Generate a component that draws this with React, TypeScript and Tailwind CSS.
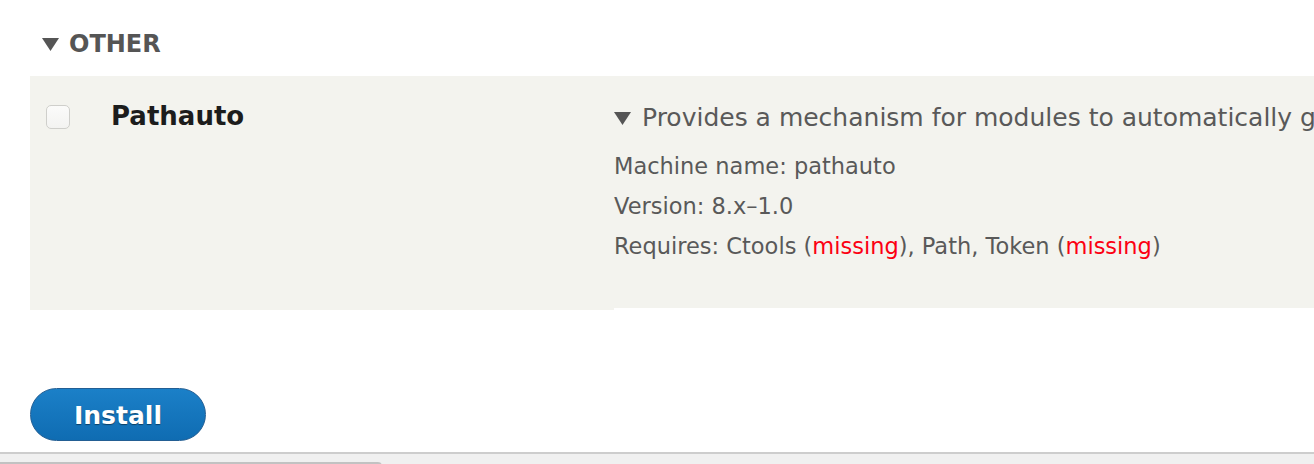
import React from "react";

const font = { fontFamily: '"DejaVu Sans", "Liberation Sans", sans-serif' };

function Caret({ className }: { className?: string }) {
  return (
    <svg viewBox="0 0 17 13" className={className} aria-hidden="true">
      <path d="M0 0 H17 L8.5 13 Z" fill="#555555" />
    </svg>
  );
}

function Missing() {
  return <span className="text-[#fc0012]">missing</span>;
}

export default function App() {
  return (
    <div className="flex h-[464px] w-[1314px] flex-col overflow-hidden bg-white" style={font}>
      <div className="flex flex-1 flex-col pl-[30px]">
        {/* section header */}
        <div className="mb-[16px] flex items-center gap-[10px] pl-[12px] pt-[28px]">
          <Caret className="h-[13px] w-[17px]" />
          <span className="text-[24px] font-bold leading-[32px] text-[#555555]">OTHER</span>
        </div>

        {/* module row */}
        <div className="flex items-start">
          <div className="flex h-[234px] w-[584px] shrink-0 items-start bg-[#f3f3ee]">
            <div className="ml-[16px] mt-[29px] h-[24px] w-[24px] rounded-[5px] border border-[#cfcfcb] bg-gradient-to-b from-[#fbfbfa] to-[#f3f3f1]" />
            <div className="ml-[41px] mt-[24px] text-[26px] font-bold leading-[32px] text-[#1c1c1c]">
              Pathauto
            </div>
          </div>
          <div className="flex-1 whitespace-nowrap bg-[#f3f3ee] pb-[42px] pt-[26px] text-[#595959]">
            <div className="flex items-center gap-[11px] text-[25px] leading-[32px]">
              <Caret className="h-[15px] w-[17px] shrink-0" />
              <span>Provides a mechanism for modules to automatically generate aliases for the content they manage.</span>
            </div>
            <div className="mt-[12px] text-[22.5px] leading-[40px]">
              <div>Machine name: pathauto</div>
              <div>Version: 8.x–1.0</div>
              <div>
                Requires: Ctools (<Missing />), Path, Token (<Missing />)
              </div>
            </div>
          </div>
        </div>

        {/* actions */}
        <div className="mt-[78px]">
          <button
            type="button"
            className="flex h-[53px] w-[176px] items-center justify-center rounded-full border border-[#235e93] bg-gradient-to-b from-[#1b80c8] to-[#0f6cb2] pt-[3px] text-[25px] font-bold text-white [text-shadow:0_1px_1px_rgba(0,0,0,0.45)]"
          >
            Install
          </button>
        </div>
      </div>

      {/* browser scrollbar strip */}
      <div className="h-[12px] shrink-0 border-t-2 border-[#cdcdcd] bg-[#f0f0f0]">
        <div className="mt-[8px] h-[4px] w-[382px] rounded-tr-[4px] bg-[#c2c2c2]" />
      </div>
    </div>
  );
}
